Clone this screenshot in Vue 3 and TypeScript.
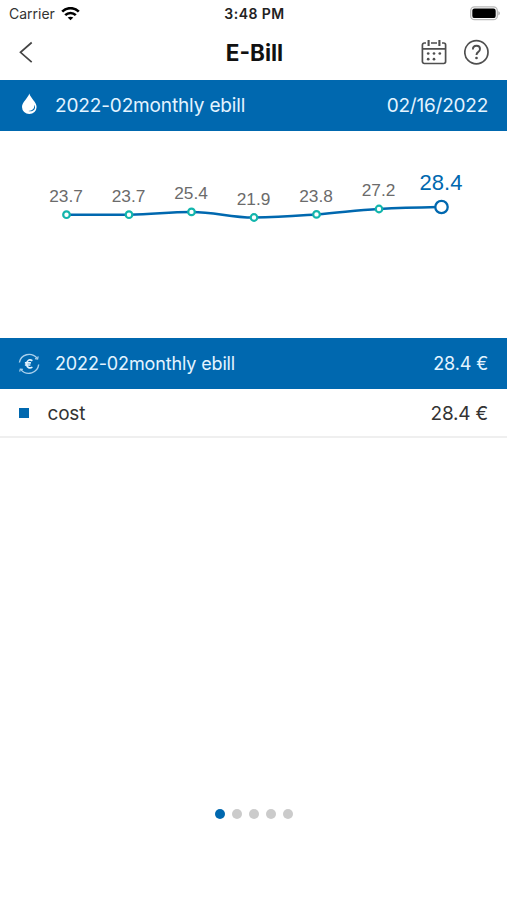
<script setup lang="ts">
interface Point {
  label: string
  x: number
  y: number
}

const points: Point[] = [
  { label: '23.7', x: 66.5, y: 214.7 },
  { label: '23.7', x: 129, y: 214.7 },
  { label: '25.4', x: 191.5, y: 211.9 },
  { label: '21.9', x: 254, y: 217.5 },
  { label: '23.8', x: 316.5, y: 214.4 },
  { label: '27.2', x: 379, y: 209 },
]
const latest: Point = { label: '28.4', x: 441.5, y: 207 }

const chartTop = 131
const pageCount = 5
const activePage = 1
</script>

<template>
  <main class="screen">
    <div class="status">
      <div class="carrier">
        <span>Carrier</span>
        <svg width="19" height="14" viewBox="0 0 19 14" fill="none" stroke="#000" stroke-width="2.6">
          <path d="M1.200 4.700C5.700 0 13.300 0 17.800 4.700" />
          <path d="M4.200 8.100c3-2.900 7.600-2.900 10.600 0" />
          <path d="M9.500 13.300 6.700 10.600c1.600-1.300 4-1.300 5.600 0Z" fill="#000" stroke="none" />
        </svg>
      </div>
      <span class="time">3:48 PM</span>
      <svg class="battery" width="30" height="15" viewBox="0 0 30 15">
        <rect x="0.700" y="0.900" width="26.600" height="12.800" rx="3.800" fill="#fff" stroke="#b9b9b9" stroke-width="1.300" />
        <rect x="2.300" y="2.500" width="23.400" height="9.600" rx="2.200" fill="#000" />
        <path d="M28.400 5.200v4.200c1.900-.7 1.900-3.500 0-4.200Z" fill="#a9a9a9" />
      </svg>
    </div>

    <header class="nav">
      <svg class="back" width="14" height="22" viewBox="0 0 14 22" fill="none" stroke="#444" stroke-width="1.700">
        <path d="M12.700 1.500 1.500 11.300l11.200 9.800" />
      </svg>
      <h1>E-Bill</h1>
      <div class="actions">
        <svg width="26" height="26" viewBox="0 0 26 26" fill="none" stroke="#4f4f4f" stroke-width="1.700">
          <path d="M5 4H3.300a1.900 1.900 0 0 0-1.900 1.900v16.700a1.900 1.900 0 0 0 1.900 1.900h19.400a1.900 1.900 0 0 0 1.900-1.900V5.900A1.900 1.900 0 0 0 22.700 4H21M10 4h6M1.400 9.900h23.200" />
          <path d="M7.600 1V7M18.400 1V7" stroke-width="2.100" />
          <g fill="#4f4f4f" stroke="none">
            <circle cx="7.200" cy="14.500" r="1.350" />
            <circle cx="13" cy="14.500" r="1.350" />
            <circle cx="18.800" cy="14.500" r="1.350" />
            <circle cx="7.200" cy="20.200" r="1.350" />
            <circle cx="13" cy="20.200" r="1.350" />
          </g>
        </svg>
        <svg width="26" height="26" viewBox="0 0 26 26" fill="none" stroke="#4f4f4f">
          <circle cx="12.400" cy="13.200" r="11.600" stroke-width="1.700" />
          <path d="M8.900 10.500c0-2.200 1.400-3.700 3.600-3.700 2.100 0 3.500 1.300 3.500 3.200 0 1.500-.7 2.300-1.900 3.100-1.200.8-1.600 1.500-1.600 3" stroke-width="1.900" />
          <circle cx="12.500" cy="19" r="1.350" fill="#4f4f4f" stroke="none" />
        </svg>
      </div>
    </header>

    <section class="bar">
      <svg class="bar-icon drop" width="22" height="24" viewBox="0 0 22 24">
        <path d="M11.300 1.500C10.100 6 4 10.200 4 15a7.300 7 0 0 0 14.600 0C18.600 10.200 12.500 6 11.300 1.500Z" fill="#fff" />
        <path d="M16.200 12.800c.5 4-2 6-5.800 6.200 3.500 1.200 7-1 6.600-4.300-.1-.7-.3-1.400-.8-1.900Z" fill="#0068af" />
      </svg>
      <span class="bar-title month">2022-02monthly ebill</span>
      <span class="bar-value date">02/16/2022</span>
    </section>

    <section class="chart">
      <svg width="507" height="206" :viewBox="`0 ${chartTop} 507 206`">
        <path
          class="line"
          d="M66.500 214.700H129C154 214.700 166 211.900 191.500 211.900C216 211.900 229 217.500 254 217.500C279 217.500 291 216.300 316.500 214.400C341 212.800 354 210.300 379 209C404 207.700 416 207.500 441.500 207"
        />
        <g v-for="p in points" :key="p.x">
          <circle class="dot" :cx="p.x" :cy="p.y" r="3.300" />
          <text class="label" :x="p.x - 0.500" :y="p.y - 12.700">{{ p.label }}</text>
        </g>
        <circle class="dot-latest" :cx="latest.x" :cy="latest.y" r="6.200" />
        <text class="label-latest" :x="latest.x - 0.500" :y="latest.y - 17">{{ latest.label }}</text>
      </svg>
    </section>

    <section class="bar">
      <svg class="bar-icon" width="22" height="24" viewBox="0 0 22 24" fill="none" stroke="#a9d0ec" stroke-width="1.400">
        <path d="M1.400 10.500C2.700 2.500 13-.8 19.200 6.300M20.700 12.500C19.700 21 9 24.500 2.800 17.600" />
        <path d="M20.200 4.400 19.600 7l-2.600-.3M1.700 19.700l.6-2.600 2.600.3" stroke-width="1.200" />
        <path d="M14.400 8.700C11.300 6.900 8.700 8.500 8.700 11.900s2.600 5 5.700 3.200M6.900 10.900h6M6.900 13h5.500" stroke="#e4f4ff" stroke-width="1.600" />
      </svg>
      <span class="bar-title bill">2022-02monthly ebill</span>
      <span class="bar-value total">28.4 €</span>
    </section>

    <div class="row">
      <span class="swatch"></span>
      <span class="row-name">cost</span>
      <span class="row-value">28.4 €</span>
    </div>

    <nav class="pager">
      <span v-for="n in pageCount" :key="n" class="page" :class="{ active: n === activePage }"></span>
    </nav>
  </main>
</template>

<style>
body {
  background: #fff;
}
</style>

<style scoped>
.screen {
  display: flex;
  flex-direction: column;
  box-sizing: border-box;
  width: 507px;
  height: 900px;
  background: #fff;
  color: #333;
  font-family: Inter, "Liberation Sans", sans-serif;
  white-space: nowrap;
}
.status {
  display: grid;
  grid-template-columns: 1fr auto 1fr;
  align-items: center;
  height: 27px;
  padding: 0 7px 0 9px;
}
.carrier {
  display: flex;
  align-items: center;
  gap: 6px;
  font-size: 14px;
  color: #333;
}
.time {
  font-size: 14px;
  font-weight: 600;
  letter-spacing: 0.45px;
  color: #222;
}
.battery {
  justify-self: end;
}
.nav {
  display: grid;
  grid-template-columns: 1fr auto 1fr;
  align-items: center;
  height: 53px;
  box-sizing: border-box;
  padding: 0 17px 3px 19px;
}
h1 {
  margin: 0;
  font-size: 22.500px;
  font-weight: 700;
  color: #111;
}
.actions {
  display: flex;
  justify-content: flex-end;
  gap: 17px;
}
.bar {
  display: flex;
  align-items: center;
  height: 51px;
  padding: 0 19px 0 18px;
  background: #0068af;
  color: #e4f4ff;
  flex: none;
}
.bar-title {
  margin-left: 15px;
}
.bar-value {
  margin-left: auto;
}
.drop {
  margin-bottom: 3px;
}
.month,
.date {
  font-size: 19px;
  letter-spacing: -0.14px;
}
.date {
  letter-spacing: -0.22px;
}
.bill,
.total {
  font-size: 18px;
  letter-spacing: -0.14px;
}
.chart {
  height: 207px;
  flex: none;
}
.chart svg {
  display: block;
}
.line {
  fill: none;
  stroke: #0068af;
  stroke-width: 2.500;
}
.dot {
  fill: #fff;
  stroke: #12b5ac;
  stroke-width: 2.200;
}
.dot-latest {
  fill: #fff;
  stroke: #0068af;
  stroke-width: 2.300;
}
.label,
.label-latest {
  font-family: "Liberation Sans", Arial, sans-serif;
  text-anchor: middle;
}
.label {
  font-size: 17.300px;
  fill: #6b6b6b;
}
.label-latest {
  font-size: 22px;
  fill: #0068af;
}
.row {
  display: flex;
  align-items: center;
  box-sizing: border-box;
  height: 49px;
  padding: 1px 19px 0;
  border-bottom: 2px solid #efefef;
  font-size: 19px;
  letter-spacing: -0.2px;
}
.swatch {
  width: 10px;
  height: 10px;
  background: #0068af;
}
.row-name {
  margin-left: 18.500px;
}
.row-value {
  margin-left: auto;
}
.pager {
  display: flex;
  justify-content: center;
  gap: 7px;
  margin-top: auto;
  padding-bottom: 81px;
}
.page {
  width: 10px;
  height: 10px;
  border-radius: 50%;
  background: #cbcbcb;
}
.page.active {
  background: #0068af;
}
</style>
